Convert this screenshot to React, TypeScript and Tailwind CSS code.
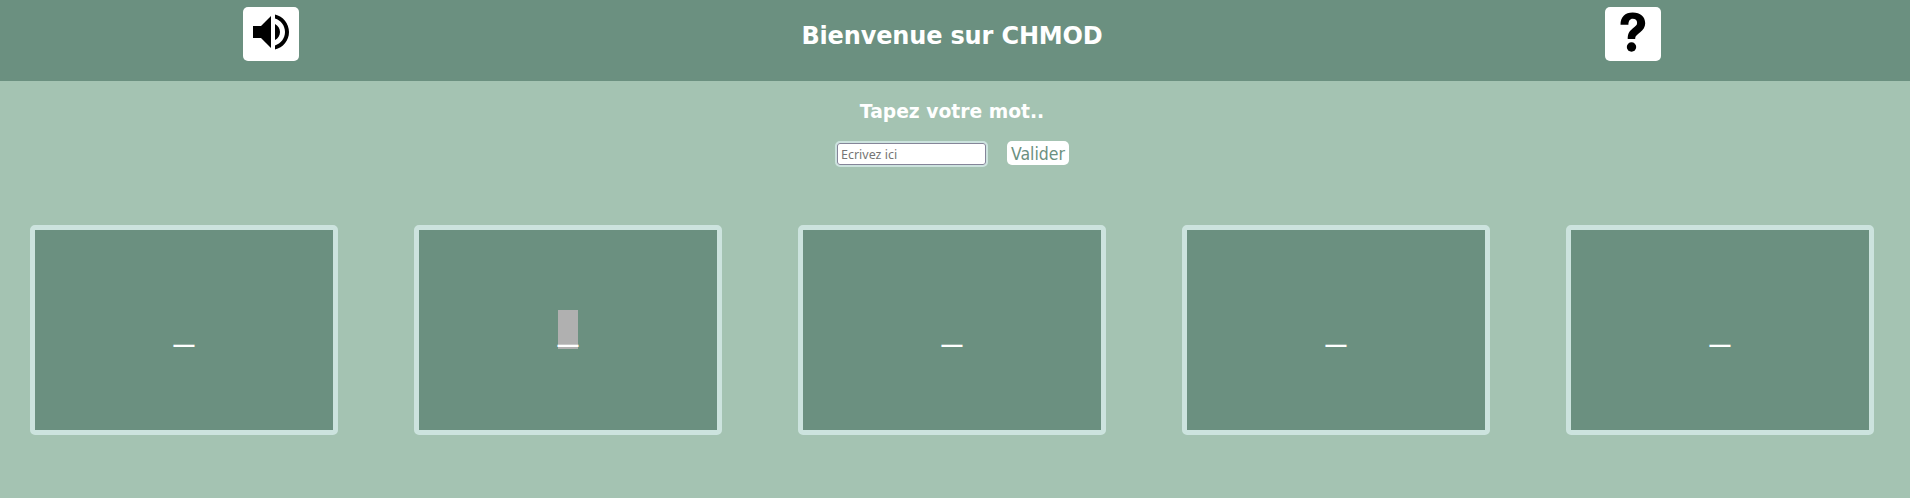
const letters = ["_", "_", "_", "_", "_"];
const ACTIVE = 1;

function SoundIcon() {
  return (
    <svg viewBox="0 0 24 24" className="size-12" fill="#000">
      <path d="M3 9v6h4l5 5V4L7 9H3zm13.5 3c0-1.77-1.02-3.29-2.5-4.03v8.05c1.48-.73 2.5-2.25 2.5-4.02zM14 3.23v2.06c2.89.86 5 3.54 5 6.71s-2.11 5.85-5 6.71v2.06c4.01-.91 7-4.49 7-8.77s-2.99-7.86-7-8.77z" />
    </svg>
  );
}

function HelpIcon() {
  return (
    <svg viewBox="0 0 48 48" className="size-12">
      <path d="M11.500 16.700C11.500 8.800 16 4.400 23.700 4.400C31.500 4.400 36.200 8.600 36.200 15.300C36.200 19 34.400 21.700 31.200 24.200C27.500 27.200 26.200 28 26.200 31H18.700C18.700 25.500 20.200 23.300 23.900 20.200C26.700 18 28.100 17.400 28.100 14.800C28.100 12.200 26.400 10.700 23.700 10.700C21 10.700 19.400 12.900 19.400 16.700Z" />
      <circle cx="22.500" cy="39" r="4.700" />
    </svg>
  );
}

export default function App() {
  return (
    <div className="h-[498px] overflow-hidden bg-[#a4c3b2] font-['DejaVu_Sans',sans-serif] text-white">
      <header className="flex h-[81px] items-start justify-between bg-[#6b9080] pt-[7px] pr-[249px] pl-[243px]">
        <button aria-label="Son" className="flex h-[54px] w-14 justify-center rounded-[5px] bg-white pt-px">
          <SoundIcon />
        </button>
        <h1 className="pt-[11px] text-[24px] leading-[36px] font-bold tracking-[-0.15px] whitespace-nowrap">
          Bienvenue sur CHMOD
        </h1>
        <button aria-label="Aide" className="flex h-[54px] w-14 justify-center rounded-[5px] bg-white pt-px">
          <HelpIcon />
        </button>
      </header>

      <main>
        <h2 className="mt-[19px] pr-[6px] text-center text-[18.72px] leading-6 font-bold">Tapez votre mot..</h2>
        <form className="mt-[17px] flex h-[26px] items-start justify-center gap-[19px] pr-[6px]" onSubmit={(e) => e.preventDefault()}>
          <input
            placeholder="Ecrivez ici"
            className="h-[26px] w-[153px] rounded-[5px] border-2 border-[#cce3de] bg-white px-[4px] font-['Noto_Sans',sans-serif] text-[12.5px] text-black shadow-[inset_0_0_0_1px_#858599] outline-none placeholder:text-[#757575]"
          />
          <button className="h-6 w-[62px] rounded-[5px] bg-white pt-px font-['DejaVu_Sans_Condensed','DejaVu_Sans',sans-serif] text-[17.5px] leading-6 text-[#6b9080]">
            Valider
          </button>
        </form>

        <section className="mt-[58px] flex gap-[76px] pl-[30px]">
          {letters.map((letter, i) => (
            <div
              key={i}
              className="flex h-[210px] w-[308px] shrink-0 items-start justify-center rounded-[5px] border-5 border-[#cce3de] bg-[#6b9080] pt-20"
            >
              <span
                className={
                  i === ACTIVE
                    ? "h-[39px] w-5 bg-[#b0b0b0] text-center font-['Liberation_Sans',sans-serif] text-[36px] leading-[36px]"
                    : "h-[39px] w-5 text-center font-['Liberation_Sans',sans-serif] text-[36px] leading-[36px]"
                }
              >
                {letter}
              </span>
            </div>
          ))}
        </section>
      </main>
    </div>
  );
}
